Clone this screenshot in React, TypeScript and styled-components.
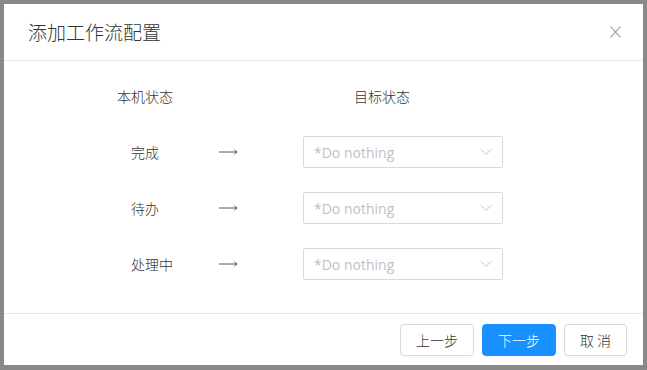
import React from "react";
import styled, { createGlobalStyle } from "styled-components";

const GlobalStyle = createGlobalStyle`
  html, body {
    margin: 0;
    padding: 0;
    background: #898989;
  }
  body {
    font-family: "Noto Sans CJK SC", "Noto Sans", sans-serif;
    -webkit-font-smoothing: antialiased;
  }
`;

const rows = ["完成", "待办", "处理中"];

export default function App() {
  return (
    <>
      <GlobalStyle />
      <Overlay>
        <Modal>
          <Header>
            <Title>添加工作流配置</Title>
            <Close aria-label="close">
              <svg width="11" height="12" viewBox="0 0 11 12">
                <path d="M0.5 0.5 L10.5 11.5 M10.5 0.5 L0.5 11.5" stroke="#8c8c8c" strokeWidth="1.1" fill="none" />
              </svg>
            </Close>
          </Header>
          <Body>
            <HeadRow>
              <HeadLabel>本机状态</HeadLabel>
              <TargetHead>目标状态</TargetHead>
            </HeadRow>
            <List>
              {rows.map((r) => (
                <Row key={r}>
                  <LabelCell>{r}</LabelCell>
                  <ArrowCell>
                    <svg width="19" height="6" viewBox="0 0 19 6">
                      <path d="M0 3 H18" stroke="#555" strokeWidth="1" />
                      <path d="M15.5 0.8 L18 3 L15.5 5.2" stroke="#555" strokeWidth="1" fill="none" />
                    </svg>
                  </ArrowCell>
                  <Select>
                    <Placeholder>*Do nothing</Placeholder>
                    <svg width="12" height="8" viewBox="0 0 12 8">
                      <path d="M1 1.5 L6 6.5 L11 1.5" stroke="#bfbfbf" strokeWidth="1" fill="none" />
                    </svg>
                  </Select>
                </Row>
              ))}
            </List>
          </Body>
          <Footer>
            <Button>上一步</Button>
            <Button $primary>下一步</Button>
            <Button>取 消</Button>
          </Footer>
        </Modal>
      </Overlay>
    </>
  );
}

const Overlay = styled.div`
  width: 647px;
  height: 370px;
  padding: 4px 4px 5px 4px;
  box-sizing: border-box;
`;

const Modal = styled.div`
  width: 639px;
  height: 361px;
  background: #fff;
  display: flex;
  flex-direction: column;
`;

const Header = styled.div`
  height: 57px;
  flex-shrink: 0;
  box-sizing: border-box;
  border-bottom: 1px solid #e8e8e8;
  display: flex;
  align-items: center;
  justify-content: space-between;
  padding: 0 21px 0 24px;
`;

const Title = styled.h2`
  margin: 0;
  font-size: 19px;
  font-weight: 300;
  color: #333;
  line-height: 26px;
`;

const Close = styled.button`
  border: none;
  background: none;
  padding: 0;
  width: 14px;
  height: 14px;
  display: flex;
  align-items: center;
  justify-content: center;
  cursor: pointer;
`;

const Body = styled.div`
  height: 252px;
  flex-shrink: 0;
  box-sizing: border-box;
  padding-top: 24px;
`;

const HeadRow = styled.div`
  display: flex;
  height: 22px;
  align-items: center;
  margin-bottom: 29px;
  padding-left: 113px;
`;

const HeadLabel = styled.div`
  width: 56px;
  font-size: 14px;
  font-weight: 300;
  color: #333;
  line-height: 22px;
  white-space: nowrap;
`;

const TargetHead = styled(HeadLabel)`
  margin-left: 181px;
`;

const List = styled.div`
  display: flex;
  flex-direction: column;
  gap: 24px;
  padding-left: 127px;
`;

const Row = styled.div`
  display: flex;
  align-items: center;
  height: 32px;
`;

const LabelCell = styled.div`
  width: 88px;
  font-size: 14px;
  font-weight: 300;
  color: #333;
  line-height: 22px;
`;

const ArrowCell = styled.div`
  width: 84px;
  display: flex;
  align-items: center;
`;

const Select = styled.div`
  width: 200px;
  height: 32px;
  box-sizing: border-box;
  border: 1px solid #d9d9d9;
  border-radius: 2px;
  display: flex;
  align-items: center;
  justify-content: space-between;
  padding: 0 10px 0 10px;
`;

const Placeholder = styled.span`
  font-family: "Open Sans", "Noto Sans", sans-serif;
  font-size: 14px;
  color: #bfbfbf;
`;

const Footer = styled.div`
  height: 52px;
  flex-shrink: 0;
  box-sizing: border-box;
  border-top: 1px solid #e8e8e8;
  display: flex;
  justify-content: flex-end;
  align-items: center;
  gap: 8px;
  padding: 0 16px;
`;

const Button = styled.button<{ $primary?: boolean }>`
  height: 32px;
  padding: 0 15px;
  font-family: "Noto Sans CJK SC", sans-serif;
  font-size: 14px;
  font-weight: 300;
  border-radius: 4px;
  border: 1px solid ${(p) => (p.$primary ? "#1890ff" : "#d9d9d9")};
  background: ${(p) => (p.$primary ? "#1890ff" : "#fff")};
  color: ${(p) => (p.$primary ? "#fff" : "#333")};
  box-shadow: 0 2px 0 rgba(0, 0, 0, 0.015);
  cursor: pointer;
`;
